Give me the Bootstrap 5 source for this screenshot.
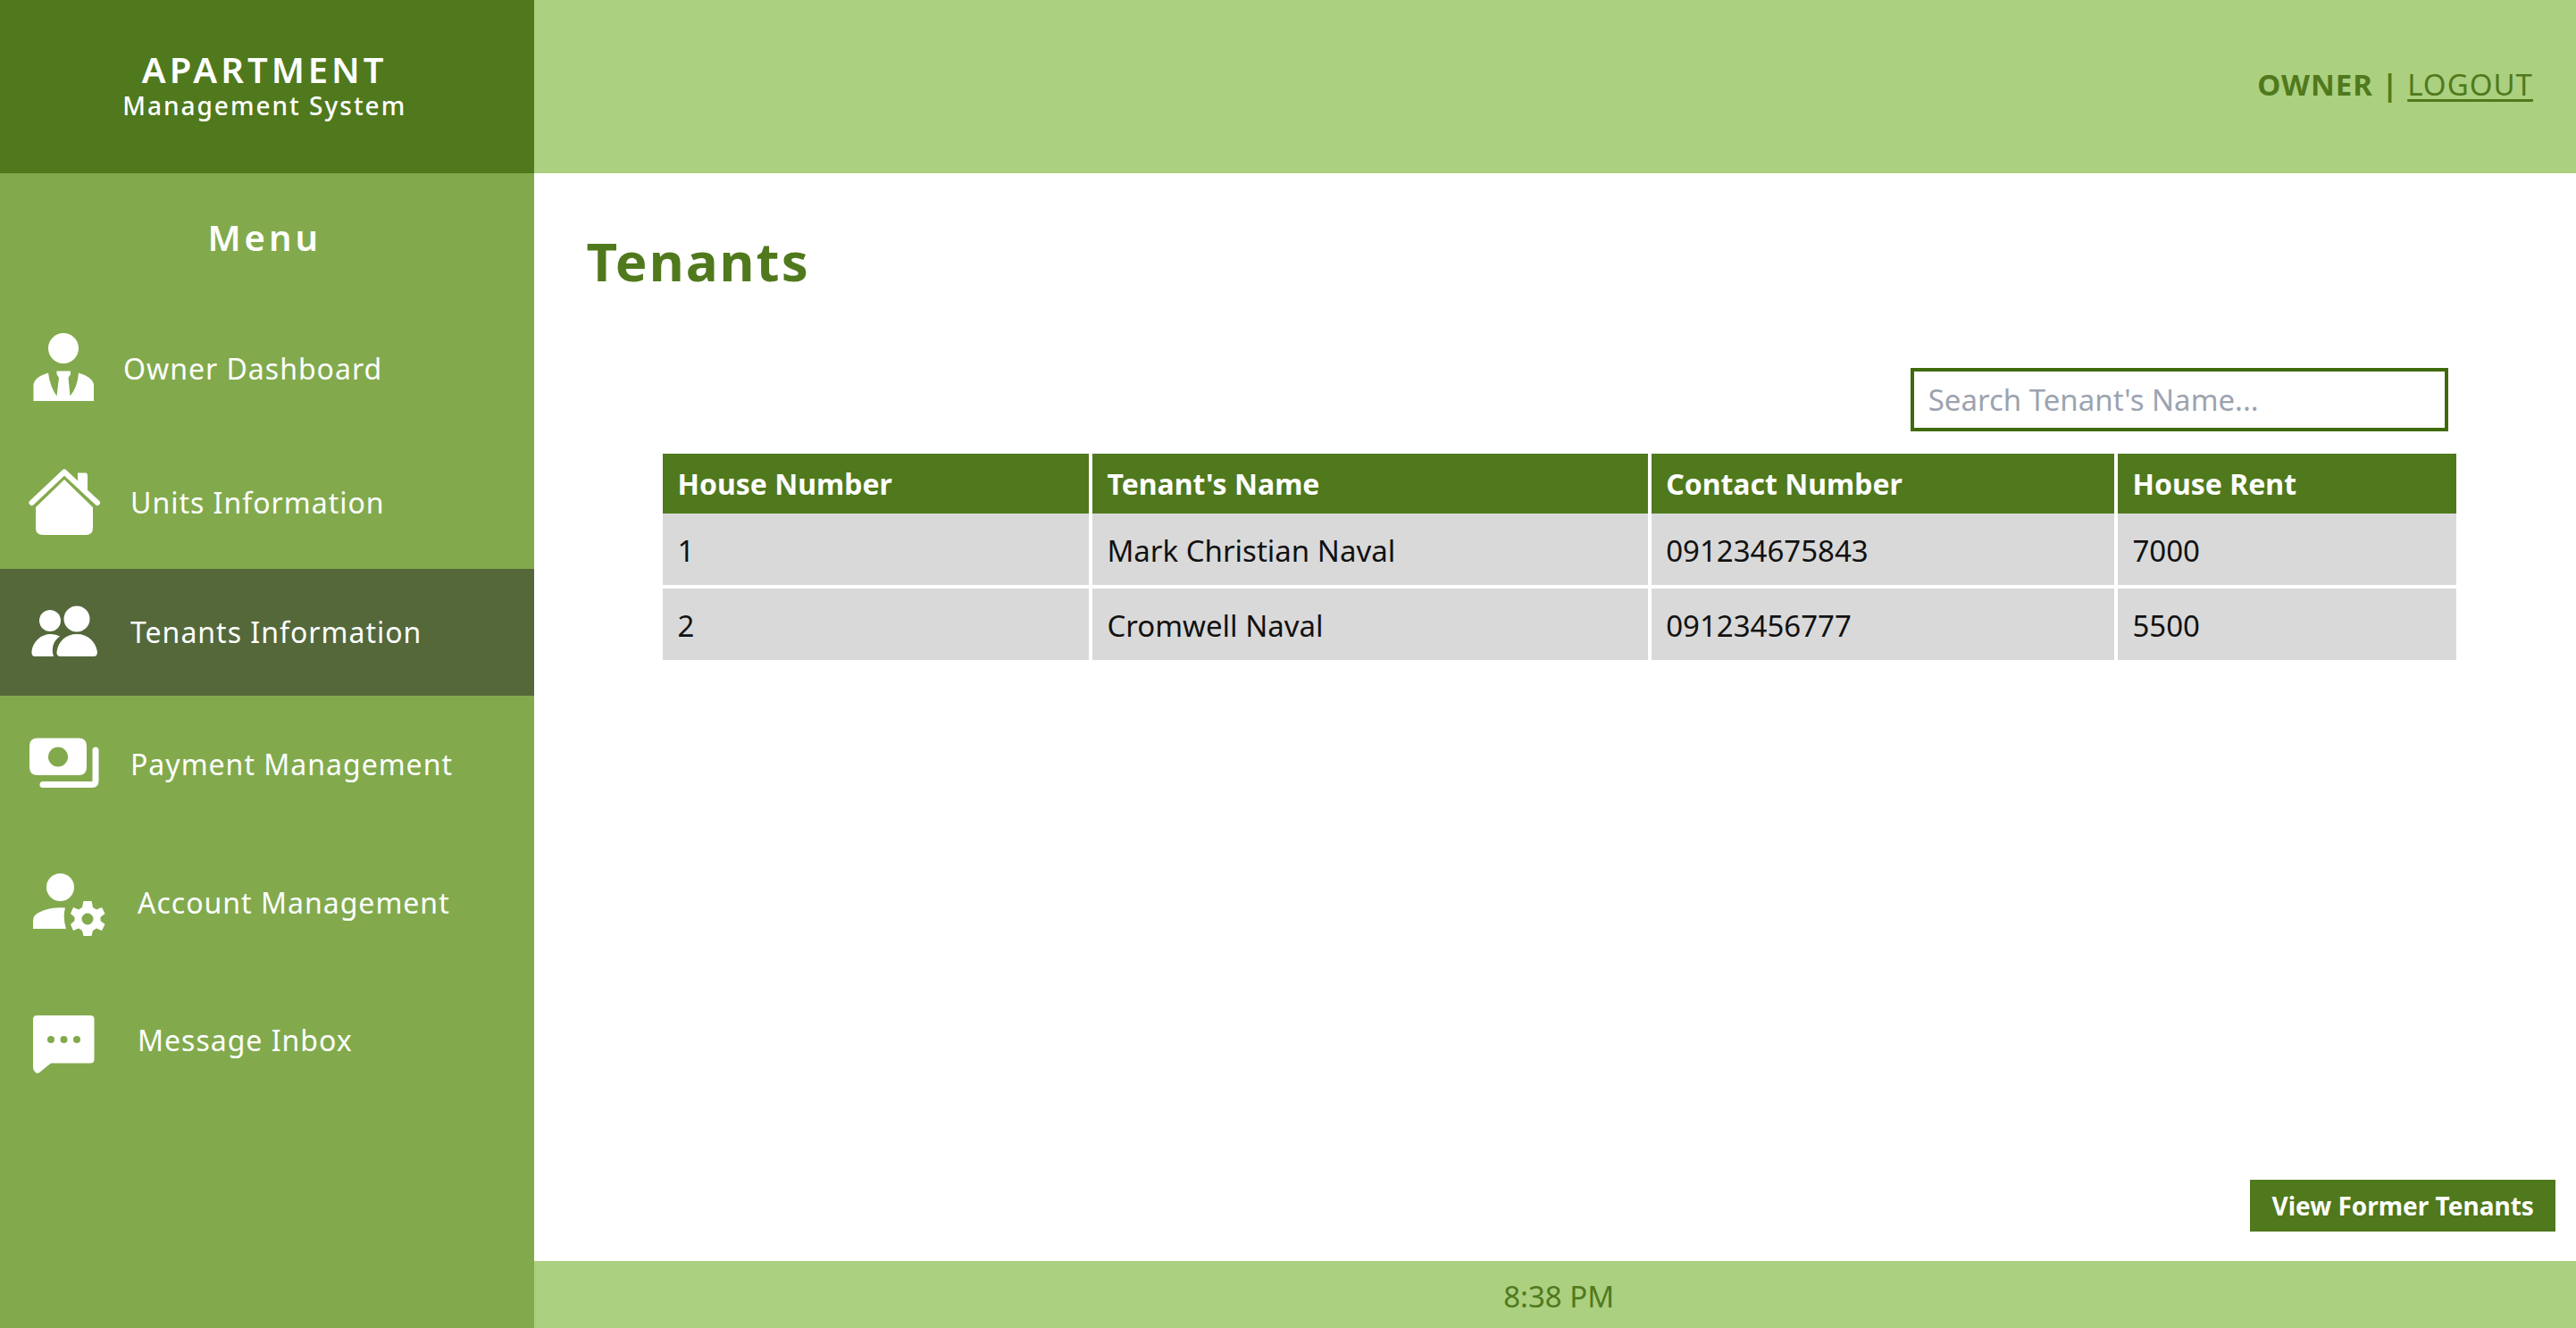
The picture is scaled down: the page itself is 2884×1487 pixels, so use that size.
<!DOCTYPE html>
<html lang="en">
<head>
<meta charset="utf-8">
<meta name="viewport" content="width=device-width, initial-scale=1">
<title>Apartment Management System - Tenants</title>
<link href="https://cdn.jsdelivr.net/npm/bootstrap@5.3.0/dist/css/bootstrap.min.css" rel="stylesheet">
<style>
  :root { --ams-dark: #50791d; --ams-mid: #82aa4d; --ams-light: #abd07f; --ams-active: #54683a; }
  body { font-family: "Noto Sans", "Open Sans", sans-serif; font-size: 33px; line-height: 44px; color: #111; }
  .ams-side { flex: 0 0 20.75%; background: var(--ams-mid); }
  .ams-top { height: 194px; }
  .ams-brand { background: var(--ams-dark); padding-right: 6px; }
  .ams-brand-name { font-size: 40px; line-height: 42px; font-weight: 600; letter-spacing: 4px; }
  .ams-brand-sub { font-size: 28px; line-height: 38px; font-weight: 500; letter-spacing: 2px; }
  .ams-menu-title { font-size: 40px; line-height: 56px; font-weight: 600; letter-spacing: 4px; padding: 44px 6px 44px 0; }
  .ams-link { padding: 33px 30px; gap: 32px; color: #fff; font-size: 32px; letter-spacing: 1px; }
  .ams-link.active { background: var(--ams-active); }
  .ams-link:hover { color: #fff; }
  .ams-link svg { flex: none; fill: #fff; }
  .ams-bar { background: var(--ams-light); color: var(--ams-dark); padding: 0 48px 4px 0; letter-spacing: 1px; }
  .ams-bar a { color: inherit; text-underline-offset: 4px; text-decoration-thickness: 3px; }
  .ams-title { font-size: 60px; line-height: 80px; font-weight: 700; letter-spacing: 2px; color: var(--ams-dark); padding: 58px 58px 0; }
  .ams-data { padding: 80px 134px 0 144px; }
  .ams-search { width: 30%; height: 71px; margin-right: 9px; border: 4px solid #3f6b0c; border-radius: 0; font-size: 33px; padding: 0 16px; }
  .ams-search::placeholder { color: #9ca3af; }
  .ams-table { table-layout: fixed; margin-top: 25px; border-collapse: separate; border-spacing: 0; }
  .ams-table th, .ams-table td { text-align: left; border-right: 4px solid #fff; padding: 0 16px; }
  .ams-table th:last-child, .ams-table td:last-child { border-right: 0; }
  .ams-table th { background: var(--ams-dark); color: #fff; height: 67px; font-size: 32px; }
  .ams-table td { background: #d9d9d9; height: 84px; border-bottom: 4px solid #fff; padding-top: 4px; }
  .ams-actions { padding: 0 23px 33px; }
  .ams-btn { background: var(--ams-dark); color: #fff; border: 0; border-radius: 0; font-size: 28px; line-height: 38px; font-weight: 700; padding: 10px 24px; }
  .ams-btn:hover { background: #446818; color: #fff; }
  .ams-foot { height: 75px; background: var(--ams-light); color: var(--ams-dark); padding: 18px 0 0 8px; }
</style>
</head>
<body>
<div class="d-flex min-vh-100">
  <aside class="ams-side d-flex flex-column">
    <div class="ams-top ams-brand text-white text-center d-flex flex-column justify-content-center">
      <div class="ams-brand-name">APARTMENT</div>
      <div class="ams-brand-sub">Management System</div>
    </div>
    <h2 class="ams-menu-title text-white text-center m-0">Menu</h2>
    <nav class="d-flex flex-column">
      <a class="ams-link d-flex align-items-center text-decoration-none" href="#">
        <svg width="76" height="84" viewBox="1 0 76 84" aria-hidden="true"><ellipse cx="42" cy="19" rx="17" ry="17"/><path d="M8.500 78V59Q10 51 25 46.500Q27 62 34.500 72.500L37 52L34.500 48V44.500H50V48L47.500 52L49.500 72.500Q58 62 59 46.500Q74 51 76 59V78Z"/></svg>
        <span>Owner Dashboard</span>
      </a>
      <a class="ams-link d-flex align-items-center text-decoration-none" href="#">
        <svg width="84" height="83" viewBox="0 0 84 83" aria-hidden="true"><path d="M10 47L42 16L74 47V70Q74 78 66 78H18Q10 78 10 70Z"/><path d="M57 8.500H66Q68 8.500 68 11V31L57 21Z"/><path d="M5.500 42L42 7.500L79 42" fill="none" stroke="#fff" stroke-width="6" stroke-linecap="round" stroke-linejoin="round"/></svg>
        <span>Units Information</span>
      </a>
      <a class="ams-link active d-flex align-items-center text-decoration-none" href="#" aria-current="page">
        <svg width="84" height="76" viewBox="0 0 84 76" aria-hidden="true"><circle cx="26" cy="25" r="12"/><circle cx="56" cy="23" r="14.500"/><path d="M9 65Q5 65 5.500 59C7 48 16 40 27 40Q33 40 37 42.500C30 47 27 56 30 65Z"/><path d="M38 65Q33 65 33.500 60C35 48 44 40 56 40S77 48 79 60Q79 65 75 65Z"/></svg>
        <span>Tenants Information</span>
      </a>
      <a class="ams-link d-flex align-items-center text-decoration-none" href="#">
        <svg width="84" height="87" viewBox="0 0 84 87" aria-hidden="true"><path fill-rule="evenodd" d="M12 14.500H58Q67 14.500 67 23V47Q67 56 58 56H12Q3 56 3 47V23Q3 14.500 12 14.500ZM35 24.500A11 11 0 1 0 35 46.500A11 11 0 1 0 35 24.500Z"/><path d="M77 28V62Q77 66.500 73 66.500H18" fill="none" stroke="#fff" stroke-width="7" stroke-linecap="round"/></svg>
        <span>Payment Management</span>
      </a>
      <a class="ams-link d-flex align-items-center text-decoration-none" href="#">
        <svg width="92" height="91" viewBox="1 0 92 91" aria-hidden="true"><circle cx="38.500" cy="28.500" r="15.500"/><path d="M8 75V66Q8 60 14 57Q27 50 44 51.500Q41 62 45 75Z"/><path fill-rule="evenodd" d="M64.500 44H73.500L75 51L79 53.500L85 51L88.500 58L83.500 62V66L88.500 70L85 77L79 74.500L75 77L73.500 83H64.500L63 77L59 74.500L53 77L50 70L54.500 66V62L50 58L53 51L59 53.500L63 51ZM69 57.500A6.500 6.500 0 1 0 69 70.500A6.500 6.500 0 1 0 69 57.500Z"/></svg>
        <span>Account Management</span>
      </a>
      <a class="ams-link d-flex align-items-center text-decoration-none" href="#">
        <svg width="92" height="85" viewBox="1 0 92 85" aria-hidden="true"><path fill-rule="evenodd" d="M13 15H72Q76.500 15 76.500 19V64Q76.500 68.500 72 68.500H28L15 79Q12 81 10 78Q8 76 8 73V19Q8 15 13 15ZM28 38A4 4 0 1 0 28 46A4 4 0 1 0 28 38ZM42.500 38A4 4 0 1 0 42.500 46A4 4 0 1 0 42.500 38ZM57 38A4 4 0 1 0 57 46A4 4 0 1 0 57 38Z"/></svg>
        <span>Message Inbox</span>
      </a>
    </nav>
  </aside>
  <div class="d-flex flex-column flex-grow-1">
    <header class="ams-top ams-bar d-flex align-items-center justify-content-end">
      <div><strong>OWNER |</strong> <a href="#">LOGOUT</a></div>
    </header>
    <main class="d-flex flex-column flex-grow-1 bg-white">
      <h1 class="ams-title m-0">Tenants</h1>
      <div class="ams-data">
        <div class="d-flex justify-content-end">
          <input class="ams-search" type="text" placeholder="Search Tenant's Name..." aria-label="Search tenant's name">
        </div>
        <table class="ams-table w-100">
          <colgroup><col style="width:23.96%"><col style="width:31.17%"><col style="width:26.02%"><col style="width:18.85%"></colgroup>
          <thead><tr><th scope="col">House Number</th><th scope="col">Tenant's Name</th><th scope="col">Contact Number</th><th scope="col">House Rent</th></tr></thead>
          <tbody>
            <tr><td>1</td><td>Mark Christian Naval</td><td>091234675843</td><td>7000</td></tr>
            <tr><td>2</td><td>Cromwell Naval</td><td>09123456777</td><td>5500</td></tr>
          </tbody>
        </table>
      </div>
      <div class="ams-actions d-flex justify-content-end mt-auto">
        <button class="btn ams-btn" type="button">View Former Tenants</button>
      </div>
    </main>
    <footer class="ams-foot text-center">8:38 PM</footer>
  </div>
</div>
<script src="https://cdn.jsdelivr.net/npm/bootstrap@5.3.0/dist/js/bootstrap.bundle.min.js"></script>
</body>
</html>
